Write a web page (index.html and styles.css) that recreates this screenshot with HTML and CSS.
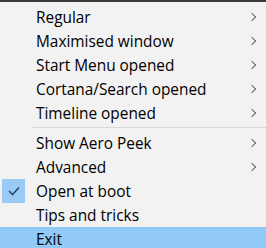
FILE: index.html
```html
<!DOCTYPE html>
<html lang="en">
  <head>
    <meta charset="UTF-8" />
    <link rel="stylesheet" href="styles.css">
    <title>Menu</title>
  </head>
  <body>
    <ul class="menu">
      <li class="item sub">Regular</li>
      <li class="item sub">Maximised window</li>
      <li class="item sub">Start Menu opened</li>
      <li class="item sub">Cortana/Search opened</li>
      <li class="item sub">Timeline opened</li>
      <li class="sep"></li>
      <li class="item sub">Show Aero Peek</li>
      <li class="item sub">Advanced</li>
      <li class="item checked">
        <span class="check">
          <svg width="12" height="10" viewBox="0 0 12 10"><path d="M1 5 L4.5 8.5 L11 1.5" fill="none" stroke="#2c4a68" stroke-width="1.6"/></svg>
        </span>
        Open at boot
      </li>
      <li class="item">Tips and tricks</li>
      <li class="item hover">Exit</li>
    </ul>
  </body>
</html>
```

FILE: styles.css
```css
/* base */
* {
  margin: 0;
  padding: 0;
  box-sizing: border-box;
}

body {
  font-family: "Open Sans", "Noto Sans", sans-serif;
  background-color: #f2f2f2;
  width: 266px;
  height: 248px;
  overflow: hidden;
}

/* menu */
.menu {
  list-style: none;
  border-top: 2px solid #3a3a3a;
  padding-top: 3px;
}

.item {
  position: relative;
  height: 24px;
  line-height: 25px;
  padding-left: 36px;
  font-size: 15.4px;
  color: #000;
}

/* submenu arrow */
.sub::after {
  content: "";
  position: absolute;
  right: 11px;
  top: 9px;
  width: 5px;
  height: 5px;
  border-top: 1px solid #666;
  border-right: 1px solid #666;
  transform: rotate(45deg);
}

.sep {
  height: 3px;
  margin-left: 32px;
  margin-bottom: 3px;
  border-bottom: 1px solid #d8d8d8;
}

.check {
  position: absolute;
  left: 2px;
  top: 0;
  width: 23px;
  height: 24px;
  background-color: #99cbf6;
  display: flex;
  align-items: center;
  justify-content: center;
}

.hover {
  background-color: #91c9f7;
}
```
